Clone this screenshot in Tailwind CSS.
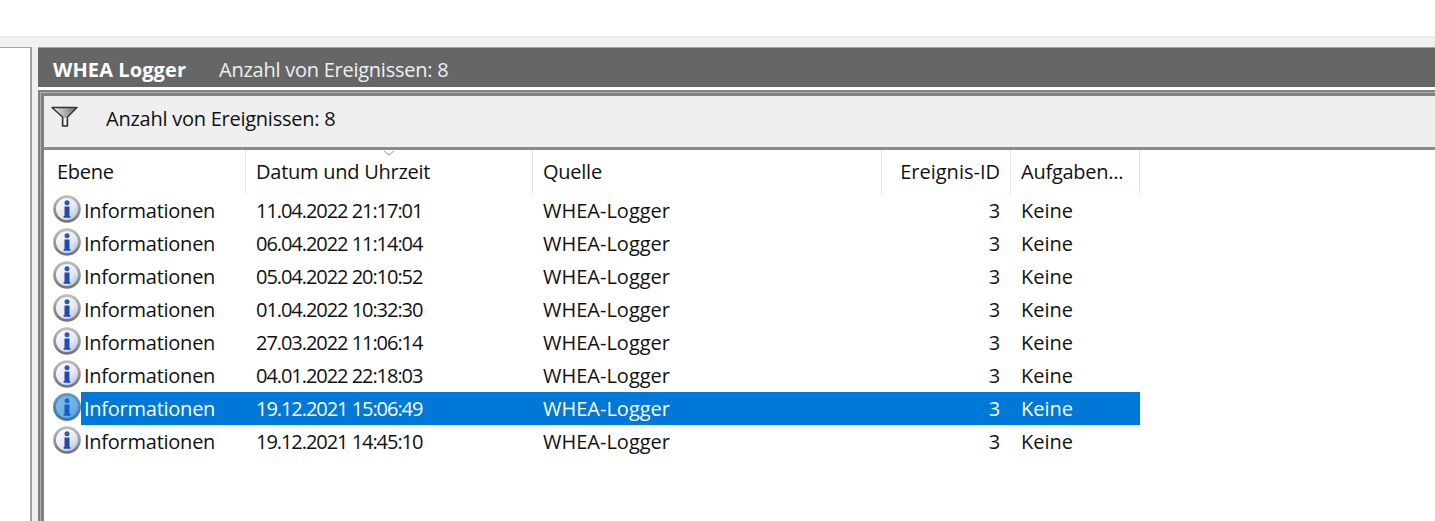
<!DOCTYPE html>
<html lang="de">
<head>
    <meta charset="UTF-8">
    <title>WHEA Logger</title>
    <script src="https://cdn.jsdelivr.net/npm/@tailwindcss/browser@4"></script>
</head>
<body class="bg-white h-[521px] w-[1435px] overflow-hidden font-['Open_Sans','Noto_Sans',sans-serif] text-[20px] tracking-[-0.25px] text-[#111]">
    <svg class="absolute w-0 h-0">
        <defs>
            <linearGradient id="ring" x1="0" y1="0" x2="0" y2="1">
                <stop offset="0" stop-color="#bcbcbc"/>
                <stop offset="1" stop-color="#757575"/>
            </linearGradient>
            <linearGradient id="disc" x1="0" y1="0" x2="1" y2="1">
                <stop offset="0" stop-color="#ffffff"/>
                <stop offset="0.6" stop-color="#e4e9f2"/>
                <stop offset="1" stop-color="#a3b2d2"/>
            </linearGradient>
            <linearGradient id="cone" x1="0" y1="0" x2="1" y2="0">
                <stop offset="0" stop-color="#f2f2f2"/>
                <stop offset="0.55" stop-color="#a9a9a9"/>
                <stop offset="1" stop-color="#6e6e6e"/>
            </linearGradient>
        </defs>
        <symbol id="info" viewBox="0 0 28 28">
            <circle cx="14" cy="14" r="12.4" fill="url(#disc)" stroke="url(#ring)" stroke-width="2.8"/>
            <circle cx="14" cy="7.8" r="2.5" fill="#2f55c4"/>
            <path d="M11.5 11.4h5v9.6h.9v1.8h-6.8V21h.9z" fill="#2248b8"/>
        </symbol>
    </svg>

    <div class="h-[36px] bg-white"></div>
    <div class="h-[485px] bg-[#f0f0f0] border-t border-[#e6e6e6] pt-[10px] flex">
        <div class="w-[32px] shrink-0 bg-white border-t border-r-2 border-[#a0a0a0]"></div>
        <div class="flex-1 ml-[6px] border-t border-[#a0a0a0] flex flex-col min-w-0">
            <div class="h-[39px] shrink-0 bg-[#666666] text-white flex items-center pl-[15px] pt-[5px]">
                <span class="font-bold w-[166px] tracking-[0.1px]">WHEA Logger</span>
                <span class="text-[#f0f0f0]">Anzahl von Ereignissen: 8</span>
            </div>
            <div class="h-[3px] shrink-0 bg-white"></div>
            <div class="flex-1 flex flex-col border-l-2 border-t-2 border-[#808080]">
                <div class="flex-1 flex flex-col border-l border-t border-[#b0b0b0]">
                    <div class="flex-1 flex flex-col border-l-[3px] border-t-[3px] border-[#808080]">
                        <div class="h-[54px] shrink-0 bg-[#efefef] border-b-[3px] border-[#8a8a8a] flex items-center pl-[7px]">
                            <svg class="w-[27px] h-[21px] shrink-0 mb-[10px]" viewBox="0 0 27 21">
                                <path d="M1 1.5h25L16.5 11v9h-5v-9z" fill="url(#cone)" stroke="#333" stroke-width="1.4" stroke-linejoin="round"/>
                                <path d="M13 12v7h2.2v-7z" fill="#f6f6f6"/>
                            </svg>
                            <span class="ml-[28px] mb-[5px]">Anzahl von Ereignissen: 8</span>
                        </div>
                        <div class="flex-1 bg-white pl-[1px] relative">
                            <svg class="absolute left-[339px] top-0 w-[12px] h-[6px]" viewBox="0 0 12 6">
                                <path d="M1 1l5 4 5-4" fill="none" stroke="#9a9a9a"/>
                            </svg>
                            <table class="table-fixed border-separate border-spacing-0 w-[1095px]">
                                <thead>
                                    <tr class="h-[44px]">
                                        <th class="w-[201px] font-normal text-left pl-[12px] border-r border-[#e5e5e5]">Ebene</th>
                                        <th class="w-[287px] font-normal text-left pl-[10px] border-r border-[#e5e5e5]">Datum und Uhrzeit</th>
                                        <th class="w-[349px] font-normal text-left pl-[10px] border-r border-[#e5e5e5]">Quelle</th>
                                        <th class="w-[129px] font-normal text-right pr-[10px] border-r border-[#e5e5e5] tracking-normal">Ereignis-ID</th>
                                        <th class="w-[129px] font-normal text-left pl-[10px] border-r border-[#e5e5e5]">Aufgaben...</th>
                                    </tr>
                                </thead>
                                <tbody>
                                    <tr class="h-[33px]">
                                        <td class="p-0"><div class="flex items-center pl-[8px] gap-[3px]"><svg class="w-[28px] h-[28px] mb-[3px]"><use href="#info"/></svg>Informationen</div></td>
                                        <td class="pl-[10px] tracking-[-1.05px]">11.04.2022 21:17:01</td>
                                        <td class="pl-[10px] tracking-normal">WHEA-Logger</td>
                                        <td class="text-right pr-[11px]">3</td>
                                        <td class="pl-[10px] tracking-normal">Keine</td>
                                    </tr>
                                    <tr class="h-[33px]">
                                        <td class="p-0"><div class="flex items-center pl-[8px] gap-[3px]"><svg class="w-[28px] h-[28px] mb-[3px]"><use href="#info"/></svg>Informationen</div></td>
                                        <td class="pl-[10px] tracking-[-1.05px]">06.04.2022 11:14:04</td>
                                        <td class="pl-[10px] tracking-normal">WHEA-Logger</td>
                                        <td class="text-right pr-[11px]">3</td>
                                        <td class="pl-[10px] tracking-normal">Keine</td>
                                    </tr>
                                    <tr class="h-[33px]">
                                        <td class="p-0"><div class="flex items-center pl-[8px] gap-[3px]"><svg class="w-[28px] h-[28px] mb-[3px]"><use href="#info"/></svg>Informationen</div></td>
                                        <td class="pl-[10px] tracking-[-1.05px]">05.04.2022 20:10:52</td>
                                        <td class="pl-[10px] tracking-normal">WHEA-Logger</td>
                                        <td class="text-right pr-[11px]">3</td>
                                        <td class="pl-[10px] tracking-normal">Keine</td>
                                    </tr>
                                    <tr class="h-[33px]">
                                        <td class="p-0"><div class="flex items-center pl-[8px] gap-[3px]"><svg class="w-[28px] h-[28px] mb-[3px]"><use href="#info"/></svg>Informationen</div></td>
                                        <td class="pl-[10px] tracking-[-1.05px]">01.04.2022 10:32:30</td>
                                        <td class="pl-[10px] tracking-normal">WHEA-Logger</td>
                                        <td class="text-right pr-[11px]">3</td>
                                        <td class="pl-[10px] tracking-normal">Keine</td>
                                    </tr>
                                    <tr class="h-[33px]">
                                        <td class="p-0"><div class="flex items-center pl-[8px] gap-[3px]"><svg class="w-[28px] h-[28px] mb-[3px]"><use href="#info"/></svg>Informationen</div></td>
                                        <td class="pl-[10px] tracking-[-1.05px]">27.03.2022 11:06:14</td>
                                        <td class="pl-[10px] tracking-normal">WHEA-Logger</td>
                                        <td class="text-right pr-[11px]">3</td>
                                        <td class="pl-[10px] tracking-normal">Keine</td>
                                    </tr>
                                    <tr class="h-[33px]">
                                        <td class="p-0"><div class="flex items-center pl-[8px] gap-[3px]"><svg class="w-[28px] h-[28px] mb-[3px]"><use href="#info"/></svg>Informationen</div></td>
                                        <td class="pl-[10px] tracking-[-1.05px]">04.01.2022 22:18:03</td>
                                        <td class="pl-[10px] tracking-normal">WHEA-Logger</td>
                                        <td class="text-right pr-[11px]">3</td>
                                        <td class="pl-[10px] tracking-normal">Keine</td>
                                    </tr>
                                    <tr class="h-[33px] text-white">
                                        <td class="p-0 bg-[linear-gradient(90deg,transparent_36px,#0078d7_36px)]"><div class="flex items-center pl-[8px] gap-[3px]"><span class="relative w-[28px] h-[28px] mb-[3px]"><svg class="w-[28px] h-[28px]"><use href="#info"/></svg><span class="absolute inset-0 rounded-full bg-[#0078d7]/50"></span></span>Informationen</div></td>
                                        <td class="pl-[10px] tracking-[-1.05px] bg-[#0078d7]">19.12.2021 15:06:49</td>
                                        <td class="pl-[10px] tracking-normal bg-[#0078d7]">WHEA-Logger</td>
                                        <td class="text-right pr-[11px] bg-[#0078d7]">3</td>
                                        <td class="pl-[10px] tracking-normal bg-[#0078d7]">Keine</td>
                                    </tr>
                                    <tr class="h-[33px]">
                                        <td class="p-0"><div class="flex items-center pl-[8px] gap-[3px]"><svg class="w-[28px] h-[28px] mb-[3px]"><use href="#info"/></svg>Informationen</div></td>
                                        <td class="pl-[10px] tracking-[-1.05px]">19.12.2021 14:45:10</td>
                                        <td class="pl-[10px] tracking-normal">WHEA-Logger</td>
                                        <td class="text-right pr-[11px]">3</td>
                                        <td class="pl-[10px] tracking-normal">Keine</td>
                                    </tr>
                                </tbody>
                            </table>
                        </div>
                    </div>
                </div>
            </div>
        </div>
    </div>
</body>
</html>
